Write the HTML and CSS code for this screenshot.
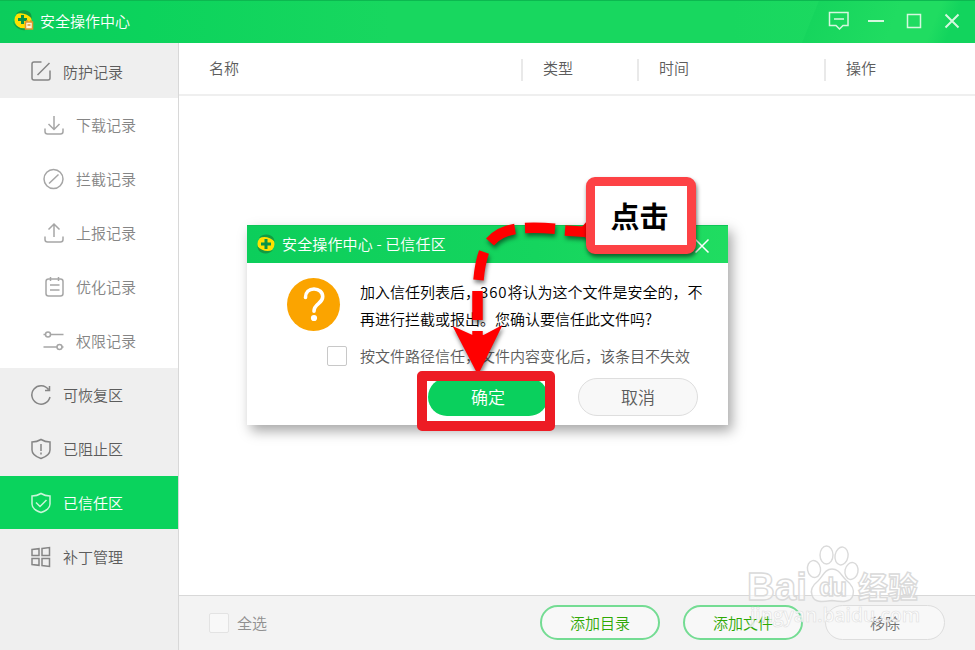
FILE: index.html
```
<!DOCTYPE html>
<html lang="zh-CN">
<head>
    <meta charset="UTF-8">
    <meta name="viewport" content="width=device-width, initial-scale=1.0">
    <title>安全操作中心</title>
    <link rel="stylesheet" href="styles.css">
</head>
<body>
    <div class="window">
        <header class="titlebar">
            <svg class="logo" width="22" height="22" viewBox="0 0 22 22">
                <circle cx="10" cy="10" r="8.500" fill="#ffe100"/>
                <path d="M3 4C7-1 15-1 18 4L19 9C15 4 9 2 3 4z" fill="#129b42"/>
                <path d="M0 10C1 16 8 20 15 18L13 20C6 21 0 16 0 10z" fill="#129b42"/>
                <path d="M9.500 5v9M5 9.500h9" stroke="#079347" stroke-width="3"/>
                <rect x="12.500" y="12" width="7" height="7" fill="#fff3d4" stroke="#e2952e" stroke-width="1.500"/>
                <path d="M14 12v-2M18 12v-2M14.500 15h3" stroke="#e2952e" stroke-width="1.500"/>
            </svg>
            <span class="title">安全操作中心</span>
            <div class="controls">
                <svg width="22" height="20" viewBox="0 0 22 20"><path d="M1.500 1.500h18.500v13h-5l-3.500 3.500-3.500-3.500H1.500zM6 8h10"/></svg>
                <svg width="16" height="16" viewBox="0 0 16 16"><path d="M0 8h16" stroke-width="2"/></svg>
                <svg width="16" height="16" viewBox="0 0 16 16"><path d="M1.500 1.500h13v13h-13z"/></svg>
                <svg width="16" height="16" viewBox="0 0 16 16"><path d="M1.500 1.500l13 13M14.500 1.500l-13 13" stroke-width="2"/></svg>
            </div>
        </header>

        <nav class="sidebar">
            <a class="item first">
                <svg viewBox="0 0 22 22"><path d="M11.500 2H4Q2 2 2 4v14q0 2 2 2h14q2 0 2-2v-7.500M7.500 15L19.500 3"/></svg>
                <span>防护记录</span>
            </a>
            <div class="submenu">
                <a class="item">
                    <svg viewBox="0 0 22 22"><path d="M11 2v13M5.500 10l5.500 5.500 5.500-5.500M2 14.500v3q0 2.500 2.500 2.500h13q2.500 0 2.500-2.500v-3"/></svg>
                    <span>下载记录</span>
                </a>
                <a class="item">
                    <svg viewBox="0 0 22 22"><circle cx="10.500" cy="11" r="9.500"/><path d="M6 15.500L15.500 6.500"/></svg>
                    <span>拦截记录</span>
                </a>
                <a class="item">
                    <svg viewBox="0 0 22 22"><path d="M11 15V2.500M5.500 7.500L11 2l5.500 5.500M2 14.500v3q0 2.500 2.500 2.500h13q2.500 0 2.500-2.500v-3"/></svg>
                    <span>上报记录</span>
                </a>
                <a class="item">
                    <svg viewBox="0 0 22 22"><rect x="3" y="3" width="17" height="17" rx="2.500"/><path d="M7.500 1v4M15.500 1v4M7 9h9.500M7 14h9.500"/></svg>
                    <span>优化记录</span>
                </a>
                <a class="item">
                    <svg viewBox="0 0 22 22"><circle cx="5" cy="4.500" r="2.500"/><circle cx="16.500" cy="17" r="2.500"/><path d="M.5 4.500h2M7.500 4.500h13M.5 17H14M19 17h1.500"/></svg>
                    <span>权限记录</span>
                </a>
            </div>
            <a class="item">
                <svg viewBox="0 0 22 22"><path d="M20 13a9.200 9.200 0 1 1-1.500-7.500M19.500 2v4.500H15"/></svg>
                <span>可恢复区</span>
            </a>
            <a class="item">
                <svg viewBox="0 0 22 22"><path d="M11 1.500Q15 4 20 4v8q0 5.500-9 8.500-9-3-9-8.500V4q5 0 9-2.500zM11 6v7M11 14.500v2"/></svg>
                <span>已阻止区</span>
            </a>
            <a class="item active">
                <svg viewBox="0 0 22 22"><path d="M11 1.500Q15 4 20 4v8q0 5.500-9 8.500-9-3-9-8.500V4q5 0 9-2.500zM6 10.500l4 4L16.500 8"/></svg>
                <span>已信任区</span>
            </a>
            <a class="item">
                <svg viewBox="0 0 22 22"><path d="M2 3.500l7-.8v6.800H2zM12 2.500l7.500-1v8H12zM2 12.500h7v6.800l-7-.8zM12 12.500h7.500v8l-7.500-1z"/></svg>
                <span>补丁管理</span>
            </a>
        </nav>

        <main class="content">
            <div class="table-head">
                <span>名称</span>
                <span>类型</span>
                <span>时间</span>
                <span>操作</span>
            </div>
            <div class="table-body"></div>
            <footer class="toolbar">
                <label class="select-all"><i class="checkbox"></i>全选</label>
                <button class="btn add">添加目录</button>
                <button class="btn add">添加文件</button>
                <button class="btn remove">移除</button>
            </footer>
        </main>
    </div>

    <div class="dialog">
        <div class="dialog-title">
            <svg width="22" height="20" viewBox="0 0 22 20">
                <circle cx="11" cy="10" r="8.500" fill="#ffe100"/>
                <path d="M4 4C8-1 16 0 18.500 4L20 8C15 3 10 2 4 4z" fill="#129b42"/>
                <path d="M18 16C14 21 6 20 3.500 16L2 12C7 17 12 18 18 16z" fill="#129b42"/>
                <path d="M11 5v10M6 10h10" stroke="#079347" stroke-width="3"/>
            </svg>
            <span>安全操作中心 - 已信任区</span>
            <svg class="close" width="16" height="16" viewBox="0 0 16 16"><path d="M1.500 1.500l13 13M14.500 1.500l-13 13"/></svg>
        </div>
        <div class="dialog-body">
            <svg class="question" width="54" height="54" viewBox="0 0 54 54">
                <circle cx="26.500" cy="27.500" r="26.500" fill="#fba400"/>
                <path d="M18.500 20.500c0-5 3.500-8.500 8.500-8.500s8.700 3.300 8.700 7.800c0 7.200-8.700 6.700-8.700 14.500" fill="none" stroke="#fff" stroke-width="3.600" stroke-linecap="round"/>
                <circle cx="27" cy="41" r="3.100" fill="#fff"/>
            </svg>
            <div class="message">加入信任列表后，<span class="num">360</span>将认为这个文件是安全的，不<br>再进行拦截或报出。您确认要信任此文件吗?</div>
        </div>
        <label class="path-option"><i class="checkbox"></i><span>按文件路径信任，文件内容变化后，该条目不失效</span></label>
        <div class="dialog-actions">
            <button class="confirm">确定</button>
            <button class="cancel">取消</button>
        </div>
    </div>

    <svg class="arrow" width="975" height="650" viewBox="0 0 975 650">
        <g fill="none" stroke="#f00" stroke-width="10.500">
            <path d="M588 232l-23-1.500"/>
            <path d="M555 228.700Q540 227.500 525 228"/>
            <path d="M515 229Q499 231.500 490 242"/>
            <path d="M484 252Q480 263 478.500 280"/>
            <path d="M477.500 291v29M477.500 331v15"/>
        </g>
        <path d="M581 228l6-7v20z" fill="#f00"/>
        <path d="M452.500 326l20 9h11l19-10L478 375z" fill="#f00"/>
    </svg>
    <div class="highlight"></div>
    <div class="callout">点击</div>

    <svg class="watermark" width="180" height="90" viewBox="0 0 180 90">
        <g class="mark">
            <ellipse cx="69" cy="28" rx="6.500" ry="8.500" transform="rotate(-10 69 28)"/>
            <ellipse cx="81.500" cy="14" rx="6.500" ry="9"/>
            <ellipse cx="96.500" cy="15" rx="6.500" ry="9" transform="rotate(10 96.500 15)"/>
            <ellipse cx="106.500" cy="30" rx="6.500" ry="8.500" transform="rotate(12 106.500 30)"/>
            <path d="M87 28c-7 0-9 7-14 12-5 4-8 9-6 14 2 8 10 7 20 5.500 10 1.500 19 2.500 21-5.500 2-6-2-11-7-15-5-5-7-11-14-11z"/>
            <text class="latin" x="2" y="59" textLength="60" lengthAdjust="spacingAndGlyphs">Bai</text>
            <text class="du" x="74" y="55" textLength="28">du</text>
            <text class="cjk" x="113" y="57" textLength="60">经验</text>
        </g>
        <text class="url" x="5" y="81" textLength="170" lengthAdjust="spacingAndGlyphs">jingyan.baidu.com</text>
    </svg>
</body>
</html>
```

FILE: styles.css
```
* {
    box-sizing: border-box;
}

body {
    margin: 0;
    width: 975px;
    height: 650px;
    position: relative;
    overflow: hidden;
    background: #fff;
    color: #5c5c5c;
    font-family: "Noto Sans CJK SC", sans-serif;
    font-size: 15px;
    font-weight: 350;
}

svg {
    display: block;
    flex: none;
}

button {
    font: inherit;
    padding: 0;
}

.window {
    display: grid;
    grid-template-columns: 179px 1fr;
    grid-template-rows: 43px 1fr;
    height: 650px;
}

.titlebar {
    grid-column: 1 / 3;
    display: flex;
    align-items: center;
    padding: 0 15px 2px 13px;
    color: #fff;
    border-top: 1px solid #0cb850;
    background: linear-gradient(112deg, transparent 82.5%, #16d55d 82.6%, #20dc61 91%, #20dc61 95%, #12d45d 97%),
                linear-gradient(90deg, #0ccd5c, #0cd35c 15%, #18d75f 40%, #18d75f 75%, #20dc61);
}

.title {
    margin-left: 5px;
    padding-bottom: 1px;
}

.controls {
    display: flex;
    align-items: center;
    gap: 22px;
    margin-left: auto;
}

.controls svg {
    fill: none;
    stroke: #d5f8df;
    stroke-width: 1.5;
}

.controls svg:first-child {
    margin-right: -4px;
}

.sidebar {
    background: #efefef;
    border-right: 1px solid #d8d8d8;
}

.item {
    display: flex;
    align-items: center;
    gap: 11px;
    height: 54px;
    padding-left: 30px;
    border-bottom: 1px solid transparent;
    background-clip: padding-box;
}

.item svg {
    width: 22px;
    height: 22px;
    fill: none;
    stroke: #858585;
    stroke-width: 1.5;
}

.first {
    height: 55px;
    padding-top: 2px;
}

.submenu {
    background: #fff;
    color: #858585;
}

.submenu .item {
    padding-left: 43px;
}

.submenu svg {
    stroke: #a6a6a6;
}

.active {
    background-color: #0ad35d;
    color: #fff;
}

.active svg {
    stroke: #c9f6d9;
}

.content {
    display: flex;
    flex-direction: column;
}

.table-head {
    display: grid;
    grid-template-columns: 342px 116px 187px 1fr;
    align-items: center;
    height: 53px;
    border-bottom: 2px solid #efefef;
}

.table-head span {
    height: 22px;
    line-height: 18px;
    padding-left: 20px;
    border-left: 2px solid #e9e9e9;
    margin-top: 3px;
}

.table-head span:first-child {
    padding-left: 30px;
    border: 0;
}

.table-body {
    flex: 1;
}

.toolbar {
    display: flex;
    align-items: center;
    height: 55px;
    padding: 0 30px 1px;
    background: #f3f3f3;
    border-top: 1px solid #d8d8d8;
}

.checkbox {
    width: 20px;
    height: 20px;
    border: 1px solid #c8c8c8;
    border-radius: 2px;
    background: #fff;
}

.select-all {
    display: flex;
    align-items: center;
    gap: 8px;
    margin-right: auto;
    color: #909090;
}

.select-all .checkbox {
    border-color: #e3e3e3;
    background: #f8f8f8;
}

.btn {
    width: 120px;
    height: 35px;
    padding-bottom: 1px;
    margin-left: 23px;
    border-radius: 18px;
    background: #f8f8f8;
}

.add {
    border: 2px solid #74dc93;
    color: #2fa905;
}

.remove {
    margin-left: 22px;
    border: 1px solid #ddd;
    color: #707070;
}

.dialog {
    position: absolute;
    left: 247px;
    top: 225px;
    width: 481px;
    height: 200px;
    background: #fff;
    box-shadow: 4px 6px 12px rgba(0, 0, 0, 0.35);
}

.dialog-title {
    display: flex;
    align-items: center;
    gap: 5px;
    height: 38px;
    padding: 0 18px 1px 8px;
    color: #fff;
    border-top: 1px solid #0cc556;
    background: linear-gradient(90deg, #0cce5b, #15d55e 60%, #20dc61);
}

.dialog-title span {
    letter-spacing: 0.15px;
    padding-bottom: 1px;
}

.close {
    margin: 3px 0 0 auto;
    fill: none;
    stroke: #fff;
    stroke-width: 1.5;
}

.dialog-body {
    display: flex;
    gap: 19px;
    padding: 14px 0 0 40px;
    height: 82px;
    color: #000;
}

.message {
    padding-top: 1px;
    line-height: 27px;
    white-space: nowrap;
}

.num {
    letter-spacing: 0.9px;
}

.path-option {
    display: flex;
    align-items: center;
    gap: 13px;
    height: 22px;
    padding-left: 80px;
    white-space: nowrap;
}

.path-option span {
    padding-bottom: 2px;
}

.dialog-actions {
    display: flex;
    gap: 30px;
    padding: 11px 0 0 181px;
}

.dialog-actions button {
    width: 120px;
    height: 38px;
    padding-bottom: 2px;
    border: 0;
    border-radius: 19px;
    font-size: 17px;
}

.dialog-actions .confirm {
    background: #0ad05d;
    color: #fff;
}

.dialog-actions .cancel {
    background: #f8f8f8;
    border: 1px solid #dedede;
    color: #5c5c5c;
}

.arrow {
    position: absolute;
    left: 0;
    top: 0;
    filter: drop-shadow(1px 3px 2px rgba(0, 0, 0, 0.5));
}

.highlight {
    position: absolute;
    left: 417px;
    top: 371px;
    width: 138px;
    height: 60px;
    border: 10px solid #ed1c24;
    border-radius: 5px;
}

.callout {
    position: absolute;
    left: 586px;
    top: 177px;
    width: 110px;
    height: 77px;
    padding-right: 3px;
    border: 9px solid #fd4245;
    border-radius: 9px;
    background: #fff;
    color: #000;
    font-size: 29px;
    font-weight: 700;
    line-height: 58px;
    text-align: center;
    box-shadow: 1px 3px 4px rgba(0, 0, 0, 0.55);
}

.watermark {
    position: absolute;
    left: 745px;
    top: 541px;
}

.mark {
    fill: rgba(255, 255, 255, 0.6);
    stroke: #dadada;
    stroke-width: 1.4;
}

.mark text {
    font-weight: 700;
}

.latin,
.du {
    font-family: "Liberation Sans", sans-serif;
}

.latin {
    font-size: 39px;
}

.du {
    font-size: 25px;
}

.cjk {
    font-size: 30px;
}

.url {
    font-family: "Open Sans", sans-serif;
    font-size: 19px;
    font-weight: 600;
    fill: rgba(255, 255, 255, 0.75);
    stroke: #e0e0e0;
    stroke-width: 0.6;
}
```
